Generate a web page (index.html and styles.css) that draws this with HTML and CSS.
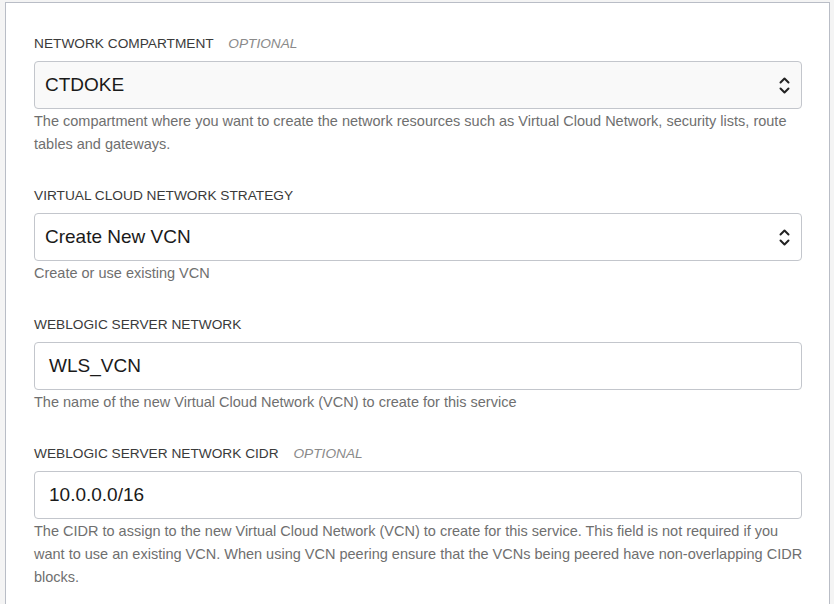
FILE: index.html
```html
<!DOCTYPE html>
<html lang="en">
<head>
<meta charset="utf-8">
<link rel="stylesheet" href="styles.css">
</head>
<body>
<div class="card">
  <div class="field">
    <div class="label">NETWORK COMPARTMENT <span class="opt">OPTIONAL</span></div>
    <div class="control select disabled">
      <span class="value">CTDOKE</span>
      <svg class="chev" width="11" height="17" viewBox="0 0 11 17"><path d="M1.5 5.5 L5.5 1.5 L9.5 5.5 M1.5 11.5 L5.5 15.5 L9.5 11.5" fill="none" stroke="#222" stroke-width="2" stroke-linecap="round" stroke-linejoin="round"/></svg>
    </div>
    <div class="help">The compartment where you want to create the network resources such as Virtual Cloud Network, security lists, route tables and gateways.</div>
  </div>
  <div class="field">
    <div class="label">VIRTUAL CLOUD NETWORK STRATEGY</div>
    <div class="control select">
      <span class="value">Create New VCN</span>
      <svg class="chev" width="11" height="17" viewBox="0 0 11 17"><path d="M1.5 5.5 L5.5 1.5 L9.5 5.5 M1.5 11.5 L5.5 15.5 L9.5 11.5" fill="none" stroke="#222" stroke-width="2" stroke-linecap="round" stroke-linejoin="round"/></svg>
    </div>
    <div class="help">Create or use existing VCN</div>
  </div>
  <div class="field">
    <div class="label">WEBLOGIC SERVER NETWORK</div>
    <div class="control input"><span class="value">WLS_VCN</span></div>
    <div class="help">The name of the new Virtual Cloud Network (VCN) to create for this service</div>
  </div>
  <div class="field">
    <div class="label">WEBLOGIC SERVER NETWORK CIDR <span class="opt">OPTIONAL</span></div>
    <div class="control input"><span class="value">10.0.0.0/16</span></div>
    <div class="help">The CIDR to assign to the new Virtual Cloud Network (VCN) to create for this service. This field is not required if you want to use an existing VCN. When using VCN peering ensure that the VCNs being peered have non-overlapping CIDR blocks.</div>
  </div>
</div>
</body>
</html>
```
FILE: styles.css
```css
html, body {
  margin: 0;
  padding: 0;
  background: #f4f4f4;
}
body {
  padding: 2px 4px 0 5px;
  font-family: "Liberation Sans", Arial, sans-serif;
  overflow: hidden;
}
.card {
  background: #fff;
  border: 1px solid #b9bdc6;
  border-bottom: none;
  padding: 32px 27px 40px 28px;
  display: flex;
  flex-direction: column;
  gap: 31px;
}
.field {
  display: flex;
  flex-direction: column;
}
.label {
  font-size: 13.7px;
  line-height: 17px;
  color: #3a3a3a;
  margin-bottom: 9px;
}
.opt {
  font-style: italic;
  color: #8a8a8a;
  margin-left: 11px;
}
.control {
  box-sizing: border-box;
  height: 48px;
  border: 1px solid #c3c6cc;
  border-radius: 4px;
  background: #fff;
  display: flex;
  align-items: center;
  font-size: 19px;
  color: #1a1a1a;
}
.select {
  padding: 0 11px 0 10px;
  justify-content: space-between;
}
.select.disabled {
  background: #f9f9f9;
}
.input {
  padding: 0 14px;
}
.chev {
  display: block;
}
.help {
  font-size: 14.5px;
  line-height: 23px;
  color: #6f6f6f;
  padding-top: 1px;
  margin-right: -5px;
}
```
